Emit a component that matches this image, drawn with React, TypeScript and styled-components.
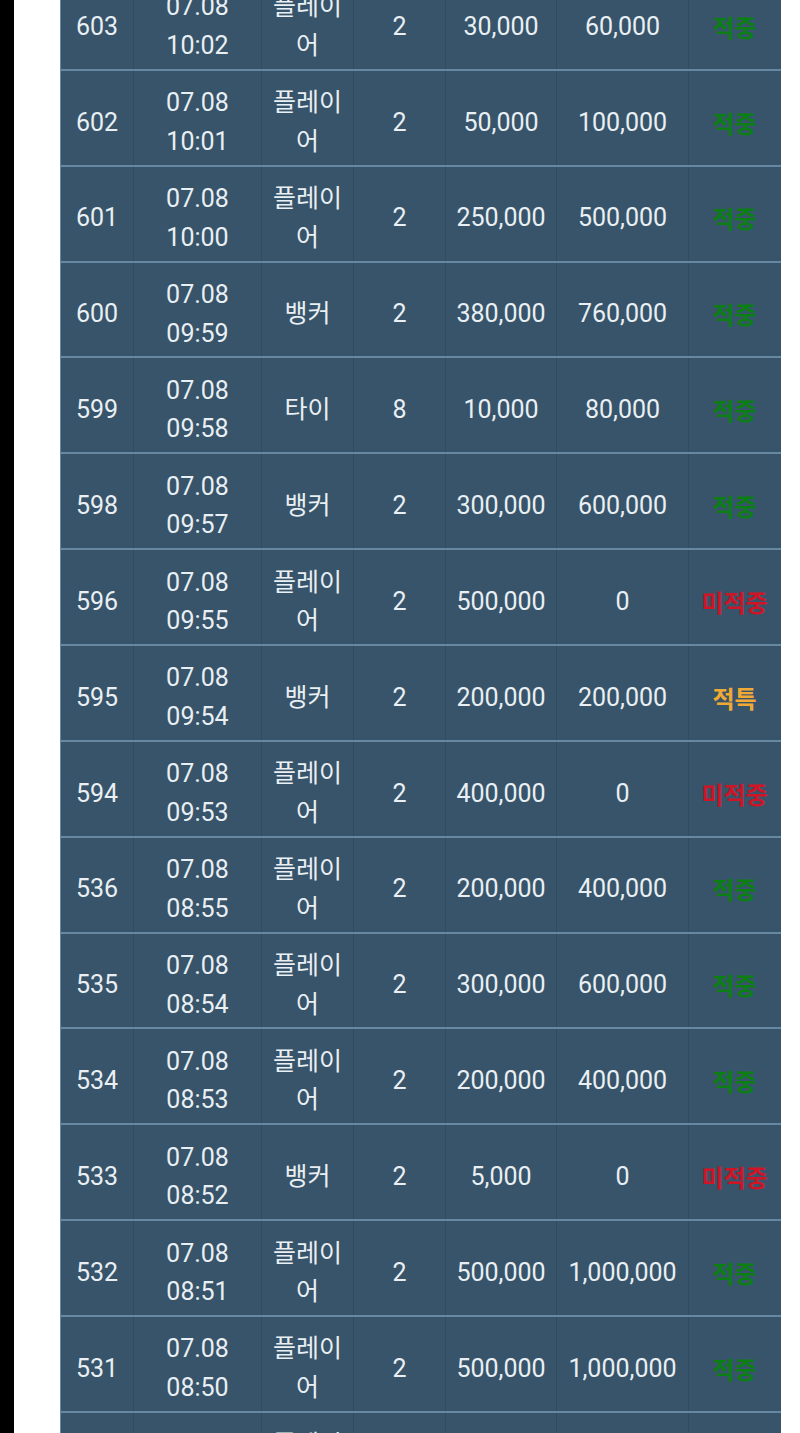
import React from "react";
import styled, { createGlobalStyle } from "styled-components";

const GlobalStyles = createGlobalStyle`
  html, body {
    margin: 0;
    padding: 0;
    height: 1433px;
    overflow: hidden;
    background: #ffffff;
  }
  body {
    font-family: Roboto, "Noto Sans CJK KR", sans-serif;
  }
`;

type Result = "hit" | "miss" | "push";

type Bet = {
  no: number;
  date: string;
  time: string;
  pick: string;
  odds: number;
  stake: string;
  payout: string;
  result: Result;
};

const bets: Bet[] = [
  { no: 603, date: "07.08", time: "10:02", pick: "플레이어", odds: 2, stake: "30,000", payout: "60,000", result: "hit" },
  { no: 602, date: "07.08", time: "10:01", pick: "플레이어", odds: 2, stake: "50,000", payout: "100,000", result: "hit" },
  { no: 601, date: "07.08", time: "10:00", pick: "플레이어", odds: 2, stake: "250,000", payout: "500,000", result: "hit" },
  { no: 600, date: "07.08", time: "09:59", pick: "뱅커", odds: 2, stake: "380,000", payout: "760,000", result: "hit" },
  { no: 599, date: "07.08", time: "09:58", pick: "타이", odds: 8, stake: "10,000", payout: "80,000", result: "hit" },
  { no: 598, date: "07.08", time: "09:57", pick: "뱅커", odds: 2, stake: "300,000", payout: "600,000", result: "hit" },
  { no: 596, date: "07.08", time: "09:55", pick: "플레이어", odds: 2, stake: "500,000", payout: "0", result: "miss" },
  { no: 595, date: "07.08", time: "09:54", pick: "뱅커", odds: 2, stake: "200,000", payout: "200,000", result: "push" },
  { no: 594, date: "07.08", time: "09:53", pick: "플레이어", odds: 2, stake: "400,000", payout: "0", result: "miss" },
  { no: 536, date: "07.08", time: "08:55", pick: "플레이어", odds: 2, stake: "200,000", payout: "400,000", result: "hit" },
  { no: 535, date: "07.08", time: "08:54", pick: "플레이어", odds: 2, stake: "300,000", payout: "600,000", result: "hit" },
  { no: 534, date: "07.08", time: "08:53", pick: "플레이어", odds: 2, stake: "200,000", payout: "400,000", result: "hit" },
  { no: 533, date: "07.08", time: "08:52", pick: "뱅커", odds: 2, stake: "5,000", payout: "0", result: "miss" },
  { no: 532, date: "07.08", time: "08:51", pick: "플레이어", odds: 2, stake: "500,000", payout: "1,000,000", result: "hit" },
  { no: 531, date: "07.08", time: "08:50", pick: "플레이어", odds: 2, stake: "500,000", payout: "1,000,000", result: "hit" },
  { no: 530, date: "07.08", time: "08:49", pick: "플레이어", odds: 2, stake: "500,000", payout: "1,000,000", result: "hit" },
];

const resultLabel: Record<Result, string> = {
  hit: "적중",
  miss: "미적중",
  push: "적특",
};

const resultColor: Record<Result, string> = {
  hit: "#0c7f14",
  miss: "#cf1426",
  push: "#f0a935",
};

const Screen = styled.div`
  display: flex;
  height: 1433px;
  overflow: hidden;
`;

const Edge = styled.div`
  width: 14px;
  flex-shrink: 0;
  background: #000000;
`;

const Page = styled.div`
  flex: 1;
  padding-left: 46px;
  padding-right: 20px;
  background: #ffffff;
  overflow: hidden;
`;

const Table = styled.div`
  width: 720px;
  margin-top: -25px;
  background: #37546a;
  border-left: 1px solid #6a8aa3;
`;

const Row = styled.div`
  display: grid;
  grid-template-columns: 73px 128px 92px 92px 111px 132px 91px;
  height: 95.86px;
  box-sizing: border-box;
  border-bottom: 2px solid #6788a2;
`;

const Cell = styled.div`
  display: flex;
  flex-direction: column;
  align-items: center;
  justify-content: center;
  padding: 10px 6px 0;
  border-right: 1px solid #304a5e;
  color: #e9eff3;
  font-size: 25px;
  line-height: 38.5px;
  text-align: center;
  &:last-child {
    border-right: none;
  }
`;

const Status = styled(Cell)<{ $tone: string }>`
  color: ${(p) => p.$tone};
  font-family: "Noto Sans CJK KR", sans-serif;
  font-weight: 700;
  font-size: 24px;
`;

const App: React.FC = () => {
  return (
    <Screen>
      <GlobalStyles />
      <Edge />
      <Page>
        <Table>
          {bets.map((b) => (
            <Row key={b.no}>
              <Cell>{b.no}</Cell>
              <Cell>
                <span>{b.date}</span>
                <span>{b.time}</span>
              </Cell>
              <Cell>{b.pick}</Cell>
              <Cell>{b.odds}</Cell>
              <Cell>{b.stake}</Cell>
              <Cell>{b.payout}</Cell>
              <Status $tone={resultColor[b.result]}>{resultLabel[b.result]}</Status>
            </Row>
          ))}
        </Table>
      </Page>
    </Screen>
  );
};

export default App;
